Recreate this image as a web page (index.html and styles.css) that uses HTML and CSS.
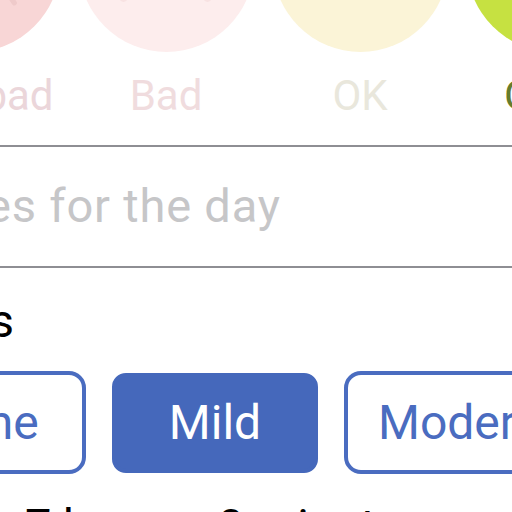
FILE: index.html
```html
<!DOCTYPE html>
<html lang="en">
<head>
<meta charset="utf-8">
<title>Daily log</title>
<link rel="stylesheet" href="styles.css">
</head>
<body>
<div class="screen">
  <div class="moods">
    <div class="mood m-vbad">
      <div class="face"><span class="brow"></span></div>
      <div class="mood-label">Very bad</div>
    </div>
    <div class="mood m-bad">
      <div class="face"><span class="eye eye-l"></span><span class="eye eye-r"></span></div>
      <div class="mood-label">Bad</div>
    </div>
    <div class="mood m-ok">
      <div class="face"></div>
      <div class="mood-label">OK</div>
    </div>
    <div class="mood m-good">
      <div class="face"></div>
      <div class="mood-label">Good</div>
    </div>
  </div>

  <div class="notes">
    <div class="placeholder">Notes for the day</div>
  </div>

  <h2 class="section-title">Cramps</h2>

  <div class="choices">
    <div class="choice">None</div>
    <div class="choice choice-on">Mild</div>
    <div class="choice">Moderate</div>
  </div>

  <div class="sleep">
    <span class="sleep-h">7 hours</span>
    <span class="sleep-m">0 minutes</span>
  </div>
</div>
</body>
</html>
```

FILE: styles.css
```css
html, body {
  margin: 0;
  padding: 0;
  background: #ffffff;
}
body {
  width: 512px;
  height: 512px;
  overflow: hidden;
  font-family: Roboto, "Liberation Sans", sans-serif;
}
.screen {
  margin-left: -125px;
  width: 1000px;
}

/* mood row */
.moods {
  display: flex;
  margin-top: -123px;
}
.mood {
  width: 194px;
  flex: none;
  display: flex;
  flex-direction: column;
  align-items: center;
}
.face {
  position: relative;
  width: 175px;
  height: 175px;
  border-radius: 50%;
  overflow: hidden;
}
.mood-label {
  margin-top: 19px;
  font-size: 42px;
  line-height: 50px;
  white-space: nowrap;
}
.m-vbad .face { background: #f8d6d6; }
.m-vbad .mood-label { color: #ebd6da; }
.m-bad .face { background: #fdeded; }
.m-bad .mood-label { color: #f0dcde; }
.m-ok .face { background: #fbf4d7; }
.m-ok .mood-label { color: #e9e7dc; }
.m-good .face { background: #c6e141; }
.m-good .mood-label { color: #667c2c; }

.brow {
  position: absolute;
  left: 122px;
  top: 108px;
  width: 5px;
  height: 22px;
  border-radius: 3px;
  background: #efcaca;
  transform: rotate(-35deg);
}
.eye {
  position: absolute;
  top: 113px;
  width: 9px;
  height: 12px;
  border-radius: 50%;
  background: #f8e2e2;
}
.eye-l { left: 40px; }
.eye-r { left: 124px; }

/* notes */
.notes {
  margin-top: 24px;
  border-top: 2px solid #8e8e93;
  border-bottom: 2px solid #8e8e93;
  padding: 31px 0 32px 33px;
}
.placeholder {
  font-size: 47px;
  line-height: 56px;
  letter-spacing: 0.8px;
  color: #c6c6c8;
  white-space: nowrap;
}

/* section */
.section-title {
  margin: 25px 0 0 -24px;
  font-size: 47px;
  line-height: 56px;
  font-weight: 400;
  color: #000000;
}

.choices {
  display: flex;
  align-items: center;
  gap: 26px;
  margin-top: 22px;
  margin-left: 3px;
}
.choice {
  box-sizing: border-box;
  flex: none;
  min-width: 208px;
  height: 103px;
  padding: 0 30px;
  border: 4px solid #4a6cc0;
  border-radius: 17px;
  display: flex;
  align-items: center;
  justify-content: center;
  font-size: 48px;
  color: #4a6cc0;
  white-space: nowrap;
}
.choice-on {
  min-width: 206px;
  height: 100px;
  border-radius: 14px;
  background: #4568bb;
  border-color: #4568bb;
  color: #ffffff;
}

.sleep {
  display: flex;
  margin-top: 24px;
  margin-left: 150px;
  font-size: 47px;
  line-height: 56px;
  color: #000000;
  white-space: nowrap;
}
.sleep-m {
  margin-left: 36px;
}
```
